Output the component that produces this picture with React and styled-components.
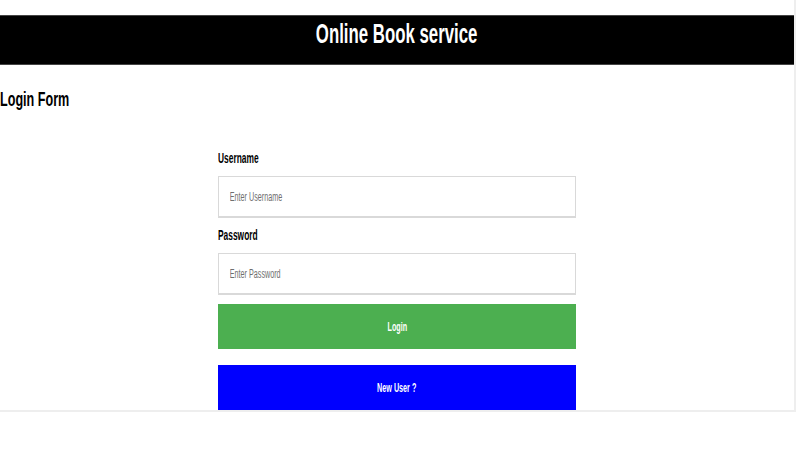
import styled, { createGlobalStyle } from "styled-components";

const squeeze = 0.6;

const GlobalStyle = createGlobalStyle`
  html, body {
    margin: 0;
    padding: 0;
    background: #ffffff;
    font-family: "Liberation Sans", Arial, sans-serif;
  }
`;

const Page = styled.div`
  width: 794px;
  padding-top: 15px;
  border-right: 2px solid #eeeeee;
  border-bottom: 2px solid #eeeeee;
  background: #ffffff;
`;

const Header = styled.header`
  height: 50px;
  padding-top: 2px;
  background: #000000;
  color: #ffffff;
  display: flex;
  align-items: flex-start;
  justify-content: center;
  border-top: 1px solid #444;
  border-bottom: 1px solid #444;
  box-sizing: border-box;
`;

const Narrow = styled.span`
  display: inline-block;
  white-space: nowrap;
  transform: scaleX(${squeeze});
  transform-origin: ${(p) => p.$origin || "left"} center;
`;

const HeaderTitle = styled.h1`
  margin: 0;
  font-size: 28px;
  line-height: 32px;
  font-weight: 700;
`;

const FormTitle = styled.h2`
  margin: 22px 0 0;
  font-size: 21px;
  line-height: 24px;
  font-weight: 700;
  color: #000;
`;

const Form = styled.form`
  width: 45%;
  margin: 39px auto 0;
  display: flex;
  flex-direction: column;
`;

const Label = styled.label`
  font-size: 14px;
  line-height: 16px;
  font-weight: 700;
  color: #000;
  margin-top: ${(p) => p.$top || 0}px;
`;

const Field = styled.div`
  margin-top: 10px;
  height: 42px;
  box-sizing: border-box;
  border: 1px solid #d9d9d9;
  border-bottom-width: 2px;
  overflow: hidden;
  display: flex;
  align-items: center;
`;

const Input = styled.input`
  width: calc(100% / ${squeeze});
  flex: none;
  border: none;
  outline: none;
  background: transparent;
  padding: 0 0 0 18px;
  box-sizing: border-box;
  font-family: "Liberation Sans", Arial, sans-serif;
  font-size: 12px;
  color: #333;
  transform: scaleX(${squeeze});
  transform-origin: left center;

  &::placeholder {
    color: #6f6f6f;
  }
`;

const Button = styled.button`
  margin-top: ${(p) => p.$top}px;
  height: 45px;
  border: none;
  padding: 0;
  background: ${(p) => p.$color};
  color: #ffffff;
  font-family: "Liberation Sans", Arial, sans-serif;
  font-size: 12px;
  font-weight: 700;
  cursor: pointer;
  display: flex;
  align-items: center;
  justify-content: center;
`;

export default function App() {
  return (
    <>
      <GlobalStyle />
      <Page>
        <Header>
          <HeaderTitle>
            <Narrow $origin="center">Online Book service</Narrow>
          </HeaderTitle>
        </Header>
        <FormTitle>
          <Narrow>Login Form</Narrow>
        </FormTitle>
        <Form onSubmit={(e) => e.preventDefault()}>
          <Label htmlFor="uname">
            <Narrow>Username</Narrow>
          </Label>
          <Field>
            <Input id="uname" type="text" placeholder="Enter Username" />
          </Field>
          <Label htmlFor="psw" $top={9}>
            <Narrow>Password</Narrow>
          </Label>
          <Field>
            <Input id="psw" type="password" placeholder="Enter Password" />
          </Field>
          <Button type="submit" $top={9} $color="#4caf50">
            <Narrow $origin="center">Login</Narrow>
          </Button>
          <Button type="button" $top={16} $color="#0000ff">
            <Narrow $origin="center">New User ?</Narrow>
          </Button>
        </Form>
      </Page>
    </>
  );
}
